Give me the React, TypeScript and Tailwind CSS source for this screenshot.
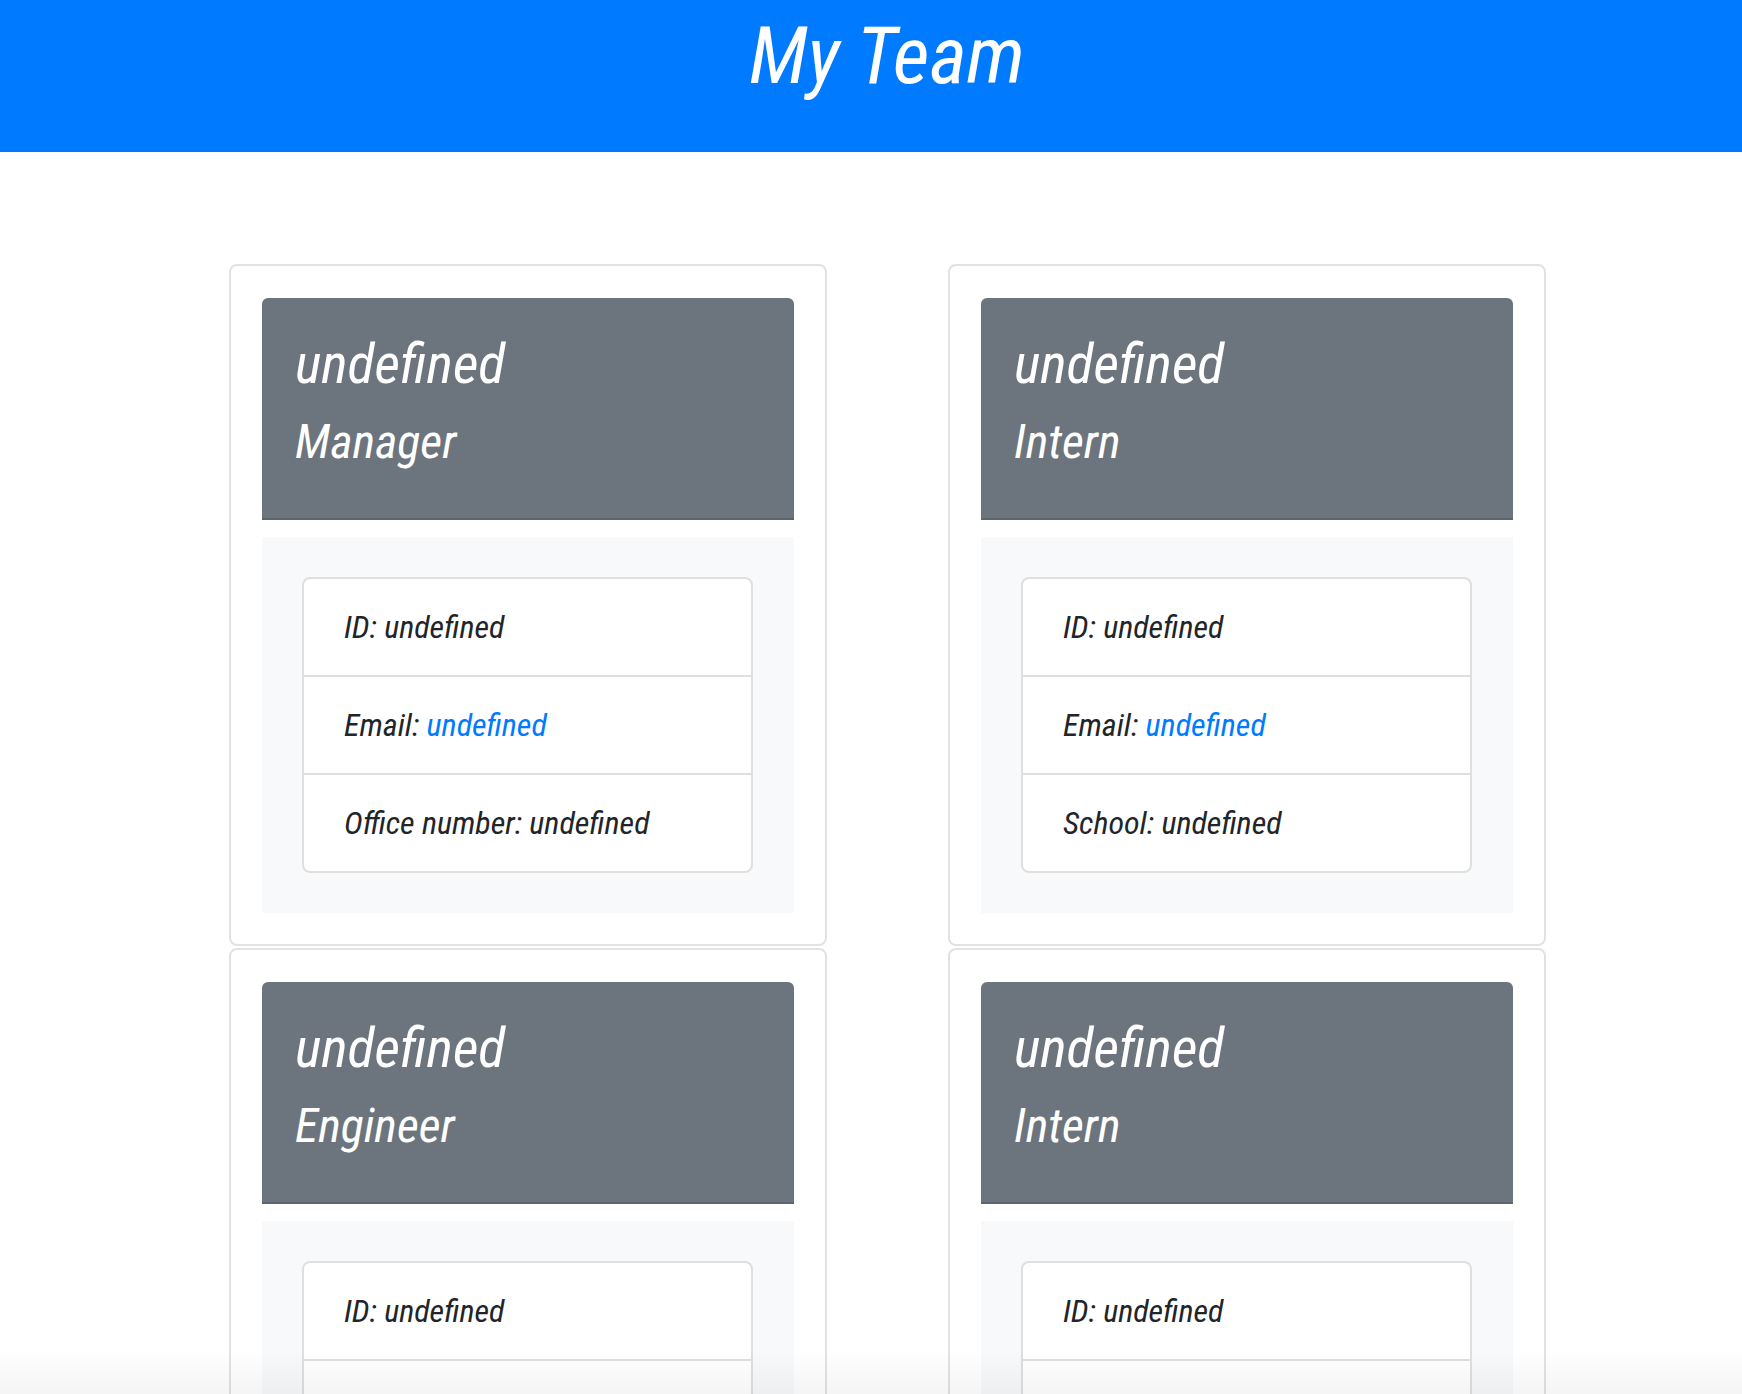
import React from "react";

type Member = { name: string; role: string; extraLabel: string };

const members: Member[] = [
  { name: "undefined", role: "Manager", extraLabel: "Office number" },
  { name: "undefined", role: "Intern", extraLabel: "School" },
  { name: "undefined", role: "Engineer", extraLabel: "GitHub" },
  { name: "undefined", role: "Intern", extraLabel: "School" },
];

const font = { fontFamily: '"Roboto Condensed", Roboto, "Liberation Sans Narrow", sans-serif' };

function Card({ m }: { m: Member }) {
  return (
    <div className="w-[598px] rounded-[8px] border-2 border-[#e2e2e2] bg-white p-[31px] pt-[32px]">
      <div className="h-[222px] rounded-t-[6px] border-b-2 border-[#5d646b] bg-[#6c757d] px-[33px] pt-[38px] text-white">
        <h2 className="text-[56px] leading-none font-normal italic font-stretch-condensed">{m.name}</h2>
        <h3 className="mt-[26px] text-[48px] leading-none font-normal italic font-stretch-condensed">{m.role}</h3>
      </div>
      <div className="mt-[17px] bg-[#f8f9fa] p-[40px] pb-[40px] pr-[41px]">
        <ul className="overflow-hidden rounded-[8px] border-2 border-[#dfdfdf] bg-white text-[32px] leading-[48px] text-[#212529] italic font-stretch-condensed">
          <li className="px-[40px] py-[24px]">ID: undefined</li>
          <li className="border-t-2 border-[#dfdfdf] px-[40px] py-[24px]">
            Email: <a className="text-[#007bff]">undefined</a>
          </li>
          <li className="border-t-2 border-[#dfdfdf] px-[40px] py-[24px]">
            {m.extraLabel}: undefined
          </li>
        </ul>
      </div>
    </div>
  );
}

export default function App() {
  return (
    <div className="min-h-screen bg-white" style={font}>
      <header className="h-[152px] bg-[#007bff] pl-[32px] pt-[16px] text-center text-white">
        <h1 className="text-[80px] leading-none italic font-stretch-condensed">My Team</h1>
      </header>
      <main className="grid grid-cols-[598px_598px] gap-x-[121px] gap-y-[2px] pb-[40px] pl-[229px] pt-[112px]">
        {members.map((m, i) => (
          <Card key={i} m={m} />
        ))}
      </main>
      <div className="pointer-events-none fixed inset-x-0 bottom-0 h-[44px] bg-linear-to-b from-transparent to-black/[0.04]" />
    </div>
  );
}
